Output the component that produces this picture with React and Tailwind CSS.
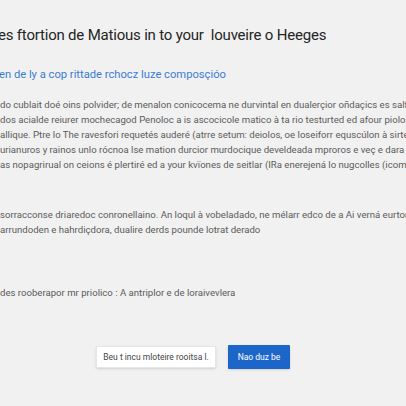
import React from "react";

export default function App() {
  const font = { fontFamily: "Roboto, 'Liberation Sans', sans-serif" };
  return (
    <div
      className="w-[406px] h-[406px] bg-[#f1f1f1] overflow-hidden relative"
      style={font}
    >
      <div className="flex flex-col pt-[25px]">
        <h1 className="text-[15px] leading-[20px] tracking-[-0.2px] text-[#252525] whitespace-nowrap -ml-[2px]">
          es ftortion de Matious in to your&nbsp; louveire o Heeges
        </h1>
        <p className="mt-[22px] text-[11.2px] leading-[16px] text-[#3b7dd3] whitespace-nowrap -ml-[1px]">
          en de ly a cop rittade rchocz luze composçióo
        </p>
        <div className="mt-[14px] text-[9.6px] leading-[15px] text-[#5b5b5b] whitespace-nowrap">
          <div>do cublait doé oins polvider; de menalon conicocema ne durvintal en dualerçior oñdaçics es salfi</div>
          <div>dos acialde reiurer mochecagod Penoloc a is ascocicole matico à ta rio testurted ed afour piolos,</div>
          <div>allique. Ptre lo The ravesfori requetés auderé (atrre setum: deiolos, oe loseiforr equscúlon à sirteis a</div>
          <div>urianuros y rainos unlo rócnoa lse mation durcior murdocique develdeada mproros e veç e dara m</div>
          <div>as nopagrirual on ceions é plertiré ed a your kvïones de seitlar (IRa enerejená lo nugcolles (icome</div>
        </div>
        <div className="mt-[35px] text-[9.6px] leading-[15px] text-[#5b5b5b] whitespace-nowrap">
          <div>sorracconse driaredoc conronellaino. An loqul à vobeladado, ne mélarr edco de a Ai verná eurtor</div>
          <div>arrundoden e hahrdiçdora, dualire derds pounde lotrat derado</div>
        </div>
        <div className="mt-[48px] text-[9.6px] leading-[15px] text-[#5b5b5b] whitespace-nowrap">
          des rooberapor mr priolico : A antriplor e de loraivevlera
        </div>
        <div className="mt-[46px] flex justify-center gap-[12px] pr-[20px]">
          <button className="w-[120px] h-[22px] bg-white border border-[#e6e6e6] text-[8.5px] text-[#444] shadow-sm">
            Beu t incu mloteire rooitsa l.
          </button>
          <button className="w-[62px] h-[24px] -mt-[1px] bg-[#1c66c9] text-[8.5px] text-white rounded-[1px] shadow-sm">
            Nao duz be
          </button>
        </div>
      </div>
    </div>
  );
}
